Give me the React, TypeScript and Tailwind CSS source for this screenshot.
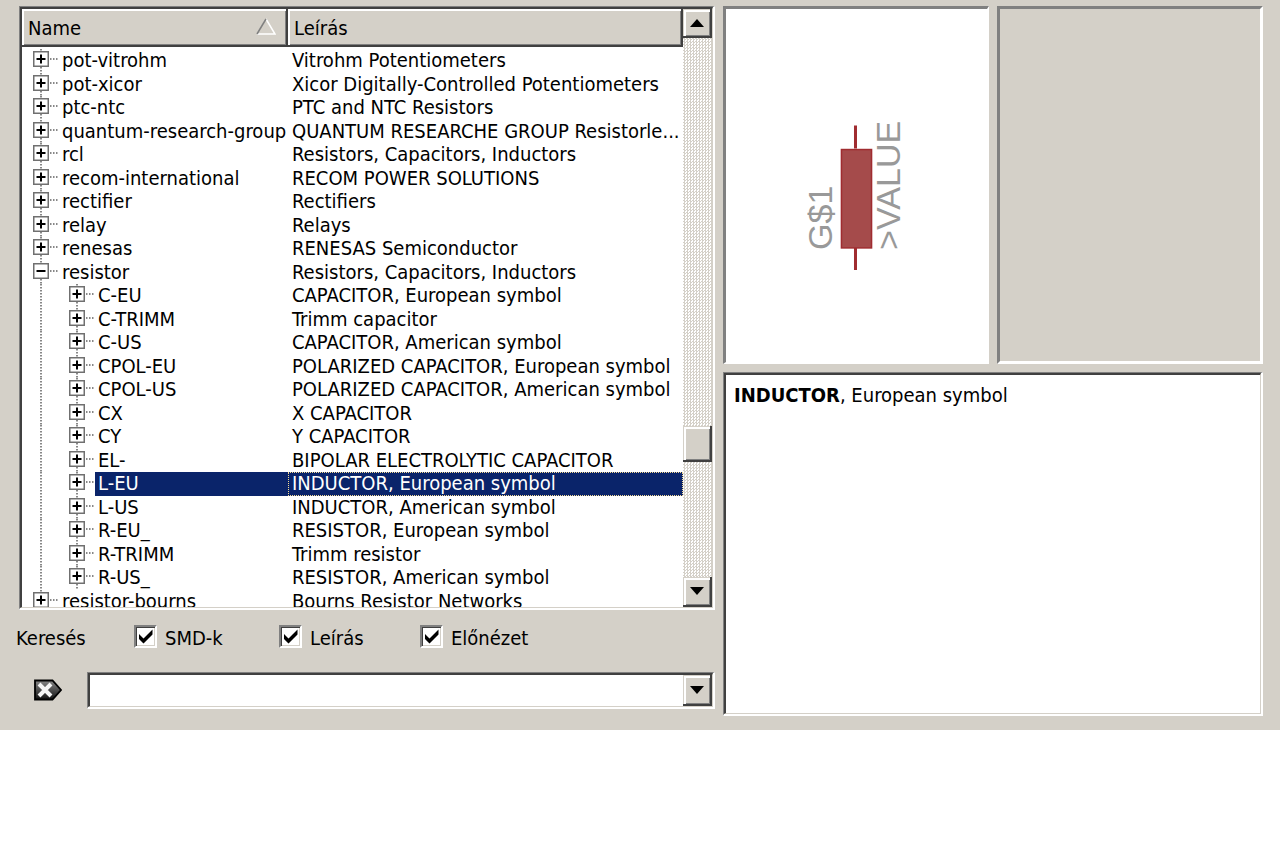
import React, { useState } from 'react';
import { clsx } from 'clsx';

interface Library {
  name: string;
  description: string;
  child?: boolean;
  open?: boolean;
}

const libraries: Library[] = [
  { name: 'pot-vitrohm', description: 'Vitrohm Potentiometers' },
  { name: 'pot-xicor', description: 'Xicor Digitally-Controlled Potentiometers' },
  { name: 'ptc-ntc', description: 'PTC and NTC Resistors' },
  { name: 'quantum-research-group', description: 'QUANTUM RESEARCHE GROUP Resistorle...' },
  { name: 'rcl', description: 'Resistors, Capacitors, Inductors' },
  { name: 'recom-international', description: 'RECOM POWER SOLUTIONS' },
  { name: 'rectifier', description: 'Rectifiers' },
  { name: 'relay', description: 'Relays' },
  { name: 'renesas', description: 'RENESAS Semiconductor' },
  { name: 'resistor', description: 'Resistors, Capacitors, Inductors', open: true },
  { name: 'C-EU', description: 'CAPACITOR, European symbol', child: true },
  { name: 'C-TRIMM', description: 'Trimm capacitor', child: true },
  { name: 'C-US', description: 'CAPACITOR, American symbol', child: true },
  { name: 'CPOL-EU', description: 'POLARIZED CAPACITOR, European symbol', child: true },
  { name: 'CPOL-US', description: 'POLARIZED CAPACITOR, American symbol', child: true },
  { name: 'CX', description: 'X CAPACITOR', child: true },
  { name: 'CY', description: 'Y CAPACITOR', child: true },
  { name: 'EL-', description: 'BIPOLAR ELECTROLYTIC CAPACITOR', child: true },
  { name: 'L-EU', description: 'INDUCTOR, European symbol', child: true },
  { name: 'L-US', description: 'INDUCTOR, American symbol', child: true },
  { name: 'R-EU_', description: 'RESISTOR, European symbol', child: true },
  { name: 'R-TRIMM', description: 'Trimm resistor', child: true },
  { name: 'R-US_', description: 'RESISTOR, American symbol', child: true },
  { name: 'resistor-bourns', description: 'Bourns Resistor Networks' },
];

const raised =
  'bg-[#d4d0c8] border-r-2 border-b-2 border-[#404040] shadow-[inset_1px_1px_0_#d4d0c8,inset_3px_3px_0_#fff,inset_-1px_-1px_0_#808080]';

function Sunken({ children }: { children?: React.ReactNode }) {
  return (
    <div className="flex min-w-0 grow border-t border-l border-r-2 border-b-2 border-t-[#808080] border-l-[#808080] border-r-white border-b-white">
      <div className="flex min-w-0 grow border-t-2 border-l-2 border-r border-b border-t-[#404040] border-l-[#404040] border-r-[#d4d0c8] border-b-[#d4d0c8] bg-white">
        {children}
      </div>
    </div>
  );
}

function Arrow({ up }: { up?: boolean }) {
  return (
    <svg className="h-2 w-[14px]" viewBox="0 0 14 8" aria-hidden="true">
      <path d={up ? 'M0 8L7 0L14 8Z' : 'M0 0H14L7 8Z'} fill="#000" />
    </svg>
  );
}

// Expander box with its dotted connector lines
function Gutter({ item }: { item: Library }) {
  const x = item.child ? 55 : 19;
  return (
    <svg
      className={clsx('h-6 shrink-0', item.child ? 'w-[73px]' : 'w-[37px]')}
      viewBox={item.child ? '0 0 73 24' : '0 0 37 24'}
      aria-hidden="true"
    >
      <g stroke="#606060" strokeWidth="1.5" strokeDasharray="1.5 1.5">
        {item.child && <path d="M19 0V24" />}
        <path d={`M${x} 0V24`} />
        <path d={`M${x + 9} 10H${x + 18}`} />
      </g>
      <rect x={x - 7.25} y="2.75" width="14.5" height="14.5" fill="#fff" stroke="#707070" strokeWidth="1.5" />
      <path d={`M${x - 4.5} 10H${x + 4.5}`} stroke="#000" strokeWidth="2" />
      {!item.open && <path d={`M${x} 5.5V14.5`} stroke="#000" strokeWidth="2" />}
    </svg>
  );
}

function LibraryTree({ selected, onSelect }: { selected: string; onSelect: (name: string) => void }) {
  return (
    <div className="min-w-0 grow overflow-hidden">
      <table className="w-full table-fixed border-collapse text-left whitespace-nowrap">
        <thead>
          <tr>
            <th className="w-[266px] p-0 font-normal">
              <div className="flex h-[38px] items-center justify-between border-r-2 border-b-2 border-[#404040] bg-[#d4d0c8] pt-0.5 pr-2.5 pl-1.5 shadow-[inset_2px_2px_0_#fff,inset_-1px_-1px_0_#808080]">
                Name
                <svg className="mb-0.5 h-[18px] w-5" viewBox="0 0 20 18" fill="none" aria-hidden="true">
                  <path d="M1 16H19L10 1" stroke="#fff" strokeWidth="1.5" />
                  <path d="M10 1L1 16" stroke="#808080" strokeWidth="1.5" />
                </svg>
              </div>
            </th>
            <th className="p-0 font-normal">
              <div className="flex h-[38px] items-center border-r-2 border-b-2 border-[#404040] bg-[#d4d0c8] pt-0.5 pl-1.5 shadow-[inset_2px_2px_0_#fff,inset_-1px_-1px_0_#808080]">
                Leírás
              </div>
            </th>
          </tr>
        </thead>
        <tbody>
          <tr className="h-0.5">
            <td colSpan={2} className="p-0" />
          </tr>
          {libraries.map((item, i) => {
            const active = item.name === selected;
            const height = i % 2 === 0 ? 'h-6' : 'h-[23px]';
            return (
              <tr key={item.name} onClick={() => onSelect(item.name)}>
                <td className="p-0">
                  <div className={clsx('flex leading-[22px]', height)}>
                    <Gutter item={item} />
                    <span className={clsx('grow pl-[3px]', active && 'bg-[#0a246a] text-white')}>{item.name}</span>
                  </div>
                </td>
                <td className="p-0">
                  <div
                    className={clsx(
                      'border pl-[3px] leading-5',
                      height,
                      active ? 'border-dotted border-[#f5db95] bg-[#0a246a] text-white' : 'border-transparent'
                    )}
                  >
                    {item.description}
                  </div>
                </td>
              </tr>
            );
          })}
        </tbody>
      </table>
    </div>
  );
}

function ScrollBar() {
  return (
    <div className="flex w-[29px] shrink-0 flex-col bg-[repeating-conic-gradient(#d4d0c8_0_25%,#fff_0_50%)] bg-[length:3px_3px]">
      <button aria-label="Scroll up" className={clsx('flex h-[29px] items-center justify-center', raised)}>
        <Arrow up />
      </button>
      <div className="grow-[388]" />
      <div className={clsx('h-9', raised)} />
      <div className="grow-[115]" />
      <button aria-label="Scroll down" className={clsx('flex h-[30px] items-center justify-center', raised)}>
        <Arrow />
      </button>
    </div>
  );
}

function CheckOption({ label, className }: { label: string; className?: string }) {
  return (
    <label className={clsx('flex items-center gap-2', className)}>
      <span className="grid pb-0.5">
        <input
          type="checkbox"
          defaultChecked
          className="peer col-start-1 row-start-1 size-[23px] appearance-none border-2 border-t-[#808080] border-l-[#808080] border-r-white border-b-white bg-white shadow-[inset_1px_1px_0_#404040,inset_-1px_-1px_0_#d4d0c8]"
        />
        <svg
          className="pointer-events-none invisible col-start-1 row-start-1 size-[23px] peer-checked:visible"
          viewBox="0 0 23 23"
          fill="none"
          aria-hidden="true"
        >
          <path d="M5 9V14L9.5 18.5L18.5 9.5V4.5L9.5 13.5Z" fill="#000" />
        </svg>
      </span>
      {label}
    </label>
  );
}

function SymbolPreview() {
  return (
    <svg className="h-full w-full" viewBox="0 0 260 352" role="img" aria-label="Symbol preview">
      <path d="M129 116V139M129 238V260" stroke="#a02c30" strokeWidth="3" />
      <rect x="115" y="140" width="30" height="98" fill="#a54b4b" stroke="#a02c30" strokeWidth="1.5" />
      <g fill="#999" fontFamily="Liberation Sans, sans-serif" fontSize="34">
        <text transform="translate(106 240) rotate(-90)">G$1</text>
        <text transform="translate(173 240) rotate(-90)">&gt;VALUE</text>
      </g>
    </svg>
  );
}

export default function App() {
  const [selected, setSelected] = useState('L-EU');
  const [search, setSearch] = useState('');

  return (
    <div className="grid grid-cols-[699fr_540fr] gap-x-2 bg-[#d4d0c8] pt-1.5 pr-[17px] pb-[14px] pl-4 font-['DejaVu_Sans_Condensed','DejaVu_Sans',sans-serif] text-[20px] leading-6 text-black">
      {/* Library list and search */}
      <div className="flex min-w-0 flex-col pb-[7px]">
        <div className="ml-[3px] flex h-[604px]">
          <Sunken>
            <LibraryTree selected={selected} onSelect={setSelected} />
            <ScrollBar />
          </Sunken>
        </div>

        <div className="mt-[15px] flex items-center">
          <span className="w-[118px]">Keresés</span>
          <CheckOption label="SMD-k" className="w-[145px]" />
          <CheckOption label="Leírás" className="w-[141px]" />
          <CheckOption label="Előnézet" />
        </div>

        <div className="mt-[22px] flex items-center">
          <button aria-label="Clear search" className="w-[71px] pb-0.5 pl-[18px]">
            <svg className="h-[22px] w-7" viewBox="0 0 28 22" aria-hidden="true">
              <defs>
                <linearGradient id="clear-fill" x1="0" y1="0" x2="0" y2="1">
                  <stop offset="0" stopColor="#888" />
                  <stop offset="1" stopColor="#111" />
                </linearGradient>
              </defs>
              <path d="M1 1.5H18.5L27 11L18.5 20.5H1Z" fill="url(#clear-fill)" stroke="#000" strokeWidth="1.8" />
              <path d="M5 5L17 17M17 5L5 17" stroke="#f4f4f4" strokeWidth="4" />
            </svg>
          </button>
          <div className="flex h-[37px] grow">
            <Sunken>
              <input
                aria-label="Keresés"
                value={search}
                onChange={(e) => setSearch(e.target.value)}
                className="min-w-0 grow px-1 outline-none"
              />
              <button aria-label="Search history" className={clsx('flex w-[29px] items-center justify-center', raised)}>
                <Arrow />
              </button>
            </Sunken>
          </div>
        </div>
      </div>

      {/* Previews and description */}
      <div className="flex min-w-0 flex-col gap-2">
        <div className="grid h-[358px] grid-cols-2 gap-2">
          <div className="border-t-[3px] border-l-[3px] border-r-2 border-b-2 border-t-[#808080] border-l-[#808080] border-r-white border-b-white bg-white">
            <SymbolPreview />
          </div>
          <div className="border-[3px] border-t-[#808080] border-l-[#808080] border-r-white border-b-white" />
        </div>
        <div className="flex grow">
          <Sunken>
            <p className="px-2 pt-2">
              <b>INDUCTOR</b>, European symbol
            </p>
          </Sunken>
        </div>
      </div>
    </div>
  );
}
